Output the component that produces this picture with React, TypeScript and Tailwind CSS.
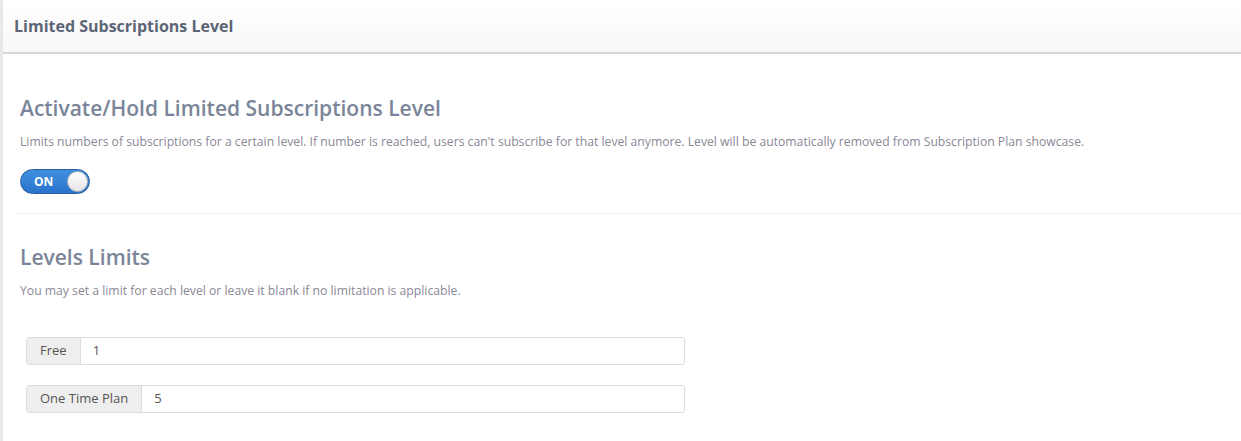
import React from "react";

const font = { fontFamily: '"Open Sans", "Segoe UI", sans-serif' };

function Toggle() {
  return (
    <div className="flex h-[25px] w-[70px] items-center justify-between rounded-full border border-[#2a5f9e] bg-gradient-to-b from-[#3f8fe0] to-[#2a74cc] pl-[13px] pr-[1px]">
      <span className="text-[12px] font-bold text-white">ON</span>
      <span className="h-[21px] w-[21px] rounded-full border border-[#b8b8b8] bg-gradient-to-b from-white to-[#e6e6e6]" />
    </div>
  );
}

function LimitInput({ label, value }: { label: string; value: string }) {
  return (
    <div className="flex h-[28px] w-[659px] overflow-hidden rounded-[3px] border border-[#dcdcdc]">
      <span className="flex items-center border-r border-[#dcdcdc] bg-[#eeeeee] px-[13px] text-[13px] text-[#555]">
        {label}
      </span>
      <span className="flex flex-1 items-center bg-white px-[12px] text-[13px] text-[#555]">{value}</span>
    </div>
  );
}

export default function App() {
  return (
    <div className="h-[441px] w-[1241px] overflow-hidden bg-white" style={font}>
      <div className="h-full border-l-[3px] border-[#e8e8e8]">
        <div className="flex h-[54px] items-center border-b-2 border-[#d6d6d6] bg-gradient-to-b from-white to-[#f8f8f8] pl-[11px]">
          <h1 className="text-[16px] font-bold text-[#5b6576]">Limited Subscriptions Level</h1>
        </div>

        <div className="pl-[13px]">
          <div className="border-b border-[#f0f0f0] pb-[19px] pl-[4px] pt-[40px]">
            <h2 className="text-[21px] font-semibold leading-[28px] text-[#7a8599]">
              Activate/Hold Limited Subscriptions Level
            </h2>
            <p className="mt-[12px] text-[12.2px] leading-[16px] text-[#8a8896]">
              Limits numbers of subscriptions for a certain level. If number is reached, users can't subscribe for that level anymore. Level will be automatically removed from Subscription Plan showcase.
            </p>
            <div className="mt-[19px]">
              <Toggle />
            </div>
          </div>

          <div className="pl-[4px] pt-[29px]">
            <h2 className="text-[21px] font-semibold leading-[28px] text-[#7a8599]">Levels Limits</h2>
            <p className="mt-[12px] text-[12.2px] leading-[16px] text-[#8a8896]">
              You may set a limit for each level or leave it blank if no limitation is applicable.
            </p>
            <div className="mt-[38px] flex flex-col gap-[20px] pl-[6px]">
              <LimitInput label="Free" value="1" />
              <LimitInput label="One Time Plan" value="5" />
            </div>
          </div>
        </div>
      </div>
    </div>
  );
}
